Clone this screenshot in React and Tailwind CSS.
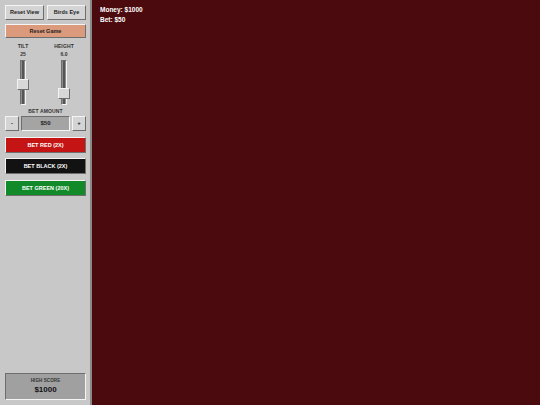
import React, { useState } from "react";

const outset =
  "border border-t-[#f4f4f4] border-l-[#f4f4f4] border-r-[#6e6e6e] border-b-[#6e6e6e]";
const inset =
  "border border-t-[#6e6e6e] border-l-[#6e6e6e] border-r-[#f4f4f4] border-b-[#f4f4f4]";

function VSlider({ label, value, pos }) {
  return (
    <div className="flex flex-col items-center w-[36px]">
      <div className="text-[5px] font-bold text-[#333] leading-none tracking-wide">{label}</div>
      <div className="text-[5px] font-bold text-[#333] leading-none mt-[3px]">{value}</div>
      <div className="relative mt-[3px] h-[45px] w-[12px] flex justify-center">
        <div className={`w-[6px] h-full bg-[#8c8c8c] ${inset}`}>
          <div className="mx-auto w-[2px] h-full bg-[#555]" />
        </div>
        <div
          className={`absolute left-0 w-[12px] h-[11px] bg-[#d8d8d8] ${outset}`}
          style={{ top: pos }}
        />
      </div>
    </div>
  );
}

export default function App() {
  const [money] = useState(1000);
  const [bet] = useState(50);

  return (
    <div
      className="flex w-[540px] h-[405px] overflow-hidden"
      style={{ fontFamily: '"Liberation Sans", Arial, sans-serif' }}
    >
      <aside className="w-[92px] shrink-0 bg-[#c8c8c8] border-r-2 border-[#8a8a8a] flex flex-col pl-[5px] pr-[4px] pt-[5px] pb-[5px]">
        <div className="flex gap-[3px]">
          <button className={`flex-1 h-[15px] bg-[#d4d4d4] ${outset} text-[5.5px] font-bold text-[#222]`}>
            Reset View
          </button>
          <button className={`flex-1 h-[15px] bg-[#d4d4d4] ${outset} text-[5.5px] font-bold text-[#222]`}>
            Birds Eye
          </button>
        </div>
        <button className={`mt-[4px] h-[14px] bg-[#dc9a7c] ${outset} text-[5.5px] font-bold text-[#222]`}>
          Reset Game
        </button>

        <div className="flex justify-between mt-[6px] pr-[4px]">
          <VSlider label="TILT" value="25" pos="19px" />
          <VSlider label="HEIGHT" value="6.0" pos="28px" />
        </div>

        <div className="mt-[4px] text-center text-[5px] font-bold text-[#333] leading-none tracking-wide">
          BET AMOUNT
        </div>
        <div className="flex gap-[2px] mt-[2px] h-[15px]">
          <button className={`w-[14px] bg-[#d4d4d4] ${outset} text-[6px] font-bold text-[#222]`}>-</button>
          <div className={`flex-1 bg-[#a4a4a4] ${inset} flex items-center justify-center text-[6px] font-bold text-[#222]`}>
            ${bet}
          </div>
          <button className={`w-[14px] bg-[#d4d4d4] ${outset} text-[6px] font-bold text-[#222]`}>+</button>
        </div>

        <button className={`mt-[6px] h-[16px] bg-[#c41414] ${outset} text-[5.5px] font-bold text-white`}>
          BET RED (2X)
        </button>
        <button className={`mt-[5px] h-[16px] bg-[#121212] ${outset} text-[5.5px] font-bold text-white`}>
          BET BLACK (2X)
        </button>
        <button className={`mt-[6px] h-[16px] bg-[#138a2a] ${outset} text-[5.5px] font-bold text-white`}>
          BET GREEN (20X)
        </button>

        <div className={`mt-auto h-[27px] bg-[#a0a0a0] ${inset} flex flex-col items-center justify-center`}>
          <div className="text-[4.5px] font-bold text-[#333] leading-none tracking-wide">HIGH SCORE</div>
          <div className="text-[8px] font-bold text-[#111] leading-none mt-[3px]">${money}</div>
        </div>
      </aside>

      <main className="flex-1 bg-[#4b0a0d] pl-[8px] pt-[5px]">
        <div className="text-[6.5px] font-bold text-white leading-[10px]">Money: ${money}</div>
        <div className="text-[6.5px] font-bold text-white leading-[10px]">Bet: ${bet}</div>
      </main>
    </div>
  );
}
